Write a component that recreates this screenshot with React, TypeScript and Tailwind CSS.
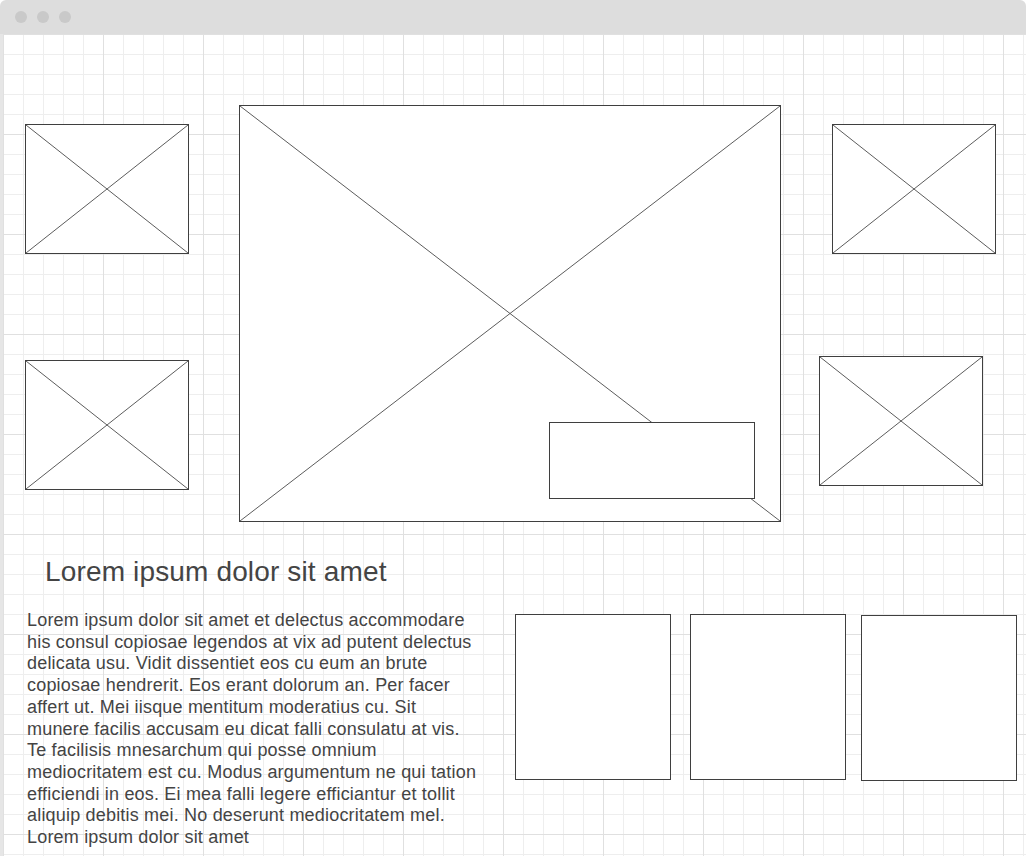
function Placeholder({ className = '' }: { className?: string }) {
  return (
    <div className={`relative border border-[#3f3f3f] bg-white ${className}`}>
      <svg className="absolute inset-0 h-full w-full" viewBox="0 0 100 100" preserveAspectRatio="none">
        <line x1="0" y1="0" x2="100" y2="100" stroke="#5c5c5c" strokeWidth="1" vectorEffect="non-scaling-stroke" />
        <line x1="100" y1="0" x2="0" y2="100" stroke="#5c5c5c" strokeWidth="1" vectorEffect="non-scaling-stroke" />
      </svg>
    </div>
  );
}

function Box({ className = '' }: { className?: string }) {
  return <div className={`border border-[#3f3f3f] bg-white ${className}`} />;
}

export default function App() {
  return (
    <div className="flex h-[856px] w-[1026px] flex-col overflow-hidden bg-white font-['Liberation_Sans',Arial,sans-serif]">
      {/* window chrome */}
      <div className="flex h-[34px] shrink-0 items-center gap-[10px] rounded-t-[6px] bg-[#dddddd] pl-[15px]">
        <span className="h-[12px] w-[12px] rounded-full bg-[#c9c9c9]" />
        <span className="h-[12px] w-[12px] rounded-full bg-[#c9c9c9]" />
        <span className="h-[12px] w-[12px] rounded-full bg-[#c9c9c9]" />
      </div>

      {/* canvas with grid */}
      <div className="flex-1 border-l-[3px] border-[#e6e6e6] [background-image:linear-gradient(to_right,#e0e0e0_1px,transparent_1px),linear-gradient(to_bottom,#e0e0e0_1px,transparent_1px),linear-gradient(to_right,#eeeeee_1px,transparent_1px),linear-gradient(to_bottom,#eeeeee_1px,transparent_1px)] [background-size:100px_100px,100px_100px,20px_20px,20px_20px]">
        {/* gallery */}
        <div className="flex items-start pt-[71px]">
          <div className="ml-[22px] flex flex-col gap-[106px] pt-[19px]">
            <Placeholder className="h-[130px] w-[164px]" />
            <Placeholder className="h-[130px] w-[164px]" />
          </div>

          <div className="relative ml-[50px]">
            <Placeholder className="h-[417px] w-[542px]" />
            <div className="absolute left-[310px] top-[317px] h-[77px] w-[206px] border border-[#3f3f3f] bg-white" />
          </div>

          <div className="ml-[38px] flex flex-col gap-[102px] pt-[19px]">
            <Placeholder className="ml-[13px] h-[130px] w-[164px]" />
            <Placeholder className="h-[130px] w-[164px]" />
          </div>
        </div>

        {/* text + cards */}
        <h1 className="ml-[42px] mt-[34px] text-[28px] leading-[32px] tracking-[0.15px] text-[#444444]">Lorem ipsum dolor sit amet</h1>

        <div className="mt-[22px] flex items-start">
          <p className="ml-[24px] w-[488px] shrink-0 text-[18px] leading-[21.7px] tracking-[0.19px] text-[#444444]">
            Lorem ipsum dolor sit amet et delectus accommodare
            <br />
            his consul copiosae legendos at vix ad putent delectus
            <br />
            delicata usu. Vidit dissentiet eos cu eum an brute
            <br />
            copiosae hendrerit. Eos erant dolorum an. Per facer
            <br />
            affert ut. Mei iisque mentitum moderatius cu. Sit
            <br />
            munere facilis accusam eu dicat falli consulatu at vis.
            <br />
            Te facilisis mnesarchum qui posse omnium
            <br />
            mediocritatem est cu. Modus argumentum ne qui tation
            <br />
            efficiendi in eos. Ei mea falli legere efficiantur et tollit
            <br />
            aliquip debitis mei. No deserunt mediocritatem mel.
            <br />
            Lorem ipsum dolor sit amet
          </p>

          <div className="mt-[4px] flex items-start">
            <Box className="h-[166px] w-[156px]" />
            <Box className="ml-[19px] h-[166px] w-[156px]" />
            <Box className="ml-[15px] mt-[1px] h-[166px] w-[156px]" />
          </div>
        </div>
      </div>
    </div>
  );
}
